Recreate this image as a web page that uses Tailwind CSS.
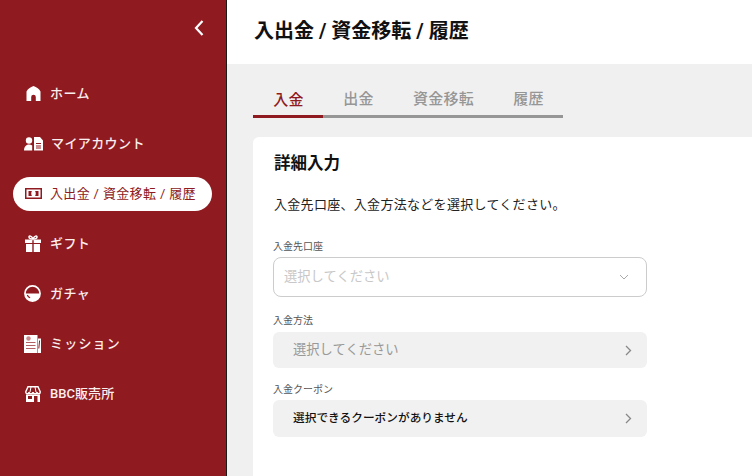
<!DOCTYPE html>
<html lang="ja">
<head>
<meta charset="UTF-8">
<title>入出金 / 資金移転 / 履歴</title>
<script src="https://cdn.jsdelivr.net/npm/@tailwindcss/browser@4"></script>
</head>
<body class="bg-[#f0f0f0]">
<div class="flex h-[476px] w-[752px] overflow-hidden font-['Roboto','Noto_Sans_CJK_JP',sans-serif]">
  <!-- sidebar -->
  <aside class="w-[227px] h-full shrink-0 bg-[#8f1b21] border-r border-[#1a1a1a] text-white">
    <div class="h-[55px] flex items-center justify-end pr-[21px]">
      <svg class="w-[12px] h-[18px]" viewBox="0 0 12 18" fill="none" stroke="#fff" stroke-width="2.2"><path d="M9.5 2L3 9l6.500 7"/></svg>
    </div>
    <nav class="flex flex-col mt-[22px] text-[13px] tracking-[0.4px]">
      <a class="h-[34px] mb-[16px] flex items-center pl-[24px] gap-[8px] pb-[1px] text-[#fbeeee] font-medium">
        <span class="w-[18px] h-[18px] flex items-center justify-center">
          <svg class="w-[15px] h-[15px]" viewBox="0 0 15 15" fill="#fff"><path d="M7.500 0C4.500 1.300 1.500 3 .5 5.500V15h4.700v-4a2.300 2.300 0 014.600 0v4h4.700V5.500C13.500 3 10.500 1.300 7.500 0z"/></svg>
        </span>
        ホーム
      </a>
      <a class="h-[34px] mb-[16px] flex items-center pl-[24px] gap-[8px] pb-[1px] text-[#fbeeee] font-medium">
        <svg class="w-[19px] h-[14px]" viewBox="0 0 19 14" fill="#fff"><circle cx="5" cy="3.500" r="3.200"/><path d="M0 13.500c0-3.500 2-6 5-6 1.200 0 2.300.3 3.200 1v5z"/><path fill-rule="evenodd" d="M10 0h6l3 3.500v10h-9zM12 6v1h5V6zm0 2.500v1h5v-1zm0 2v1h5v-1z"/></svg>
        マイアカウント
      </a>
      <a class="h-[34px] mb-[16px] ml-[13px] w-[199px] rounded-full bg-white flex items-center pl-[12px] gap-[8px] pb-[1px] text-[#8f1b21] tracking-[0.35px]">
        <svg class="w-[17px] h-[11px]" viewBox="0 0 17 11" fill="#8f1b21"><path fill-rule="evenodd" d="M0 0h17v11H0zm1.500 1.500v8h14v-8z"/><path d="M3.500 3H7C6 4 6 7 7 8H3.500zM13.500 3H10c1 1 1 4 0 5h3.500z"/></svg>
        入出金 / 資金移転 / 履歴
      </a>
      <a class="h-[34px] mb-[16px] flex items-center pl-[25px] gap-[9px] pb-[1px] text-[#fbeeee] font-medium">
        <svg class="w-[16px] h-[17px]" viewBox="0 0 16 17" fill="#fff"><path d="M0 4.500h7.300V8H0zM8.700 4.500H16V8H8.700zM1 9h6.300v8H1zM8.700 9H15v8H8.700z"/><path fill="none" stroke="#fff" stroke-width="1.500" d="M8 4C6 4 4 3.200 4 2 4 .5 6.500.5 8 4c1.500-3.500 4-3.500 4-2 0 1.200-2 2-4 2z"/></svg>
        ギフト
      </a>
      <a class="h-[34px] mb-[16px] flex items-center pl-[24px] gap-[9px] pb-[1px] text-[#fbeeee] font-medium">
        <svg class="w-[17px] h-[17px]" viewBox="0 0 18 18"><circle cx="9" cy="9" r="8" fill="none" stroke="#fff" stroke-width="1.800"/><path d="M1 9h16a8 8 0 01-16 0z" fill="#fff"/><path d="M3.500 10.500c.6 1.500 1.800 2.500 3 3" fill="none" stroke="#8f1b21" stroke-width="1.200"/></svg>
        ガチャ
      </a>
      <a class="h-[34px] mb-[16px] flex items-center pl-[24px] gap-[9px] pb-[1px] text-[#fbeeee] font-medium tracking-[1.2px]">
        <svg class="w-[17px] h-[18px]" viewBox="0 0 17 18"><path d="M0 0h13.500v18H0z" fill="#fff"/><path d="M14 3.500h3V18h-3z" fill="#fff"/><path d="M2 7.500h9.500M2 10.500h9.500M2 13.500h9.500" stroke="#8f1b21" stroke-width=".7"/><circle cx="4.500" cy="3.500" r="2.200" fill="#c98a8d"/><path d="M15.600 5.500l-.8 8" stroke="#8f1b21" stroke-width="1"/></svg>
        ミッション
      </a>
      <a class="h-[34px] flex items-center pl-[25px] gap-[9px] pb-[1px] text-[#fbeeee] font-medium tracking-[0.05px]">
        <svg class="w-[16px] h-[16px]" viewBox="0 0 16 16"><path d="M3 .7h10L15.300 6c0 1.100-.8 1.800-1.700 1.800S12 7 12 6c0 1-.9 1.800-2 1.800S8 7 8 6c0 1-.9 1.800-2 1.800S4 7 4 6c0 1-.8 1.800-1.600 1.800S.7 7.100.7 6z" fill="#8f1b21" stroke="#fff" stroke-width="1.400"/><path d="M6 1L5 6M10 1l1 5" stroke="#fff" stroke-width="1"/><path fill="#fff" fill-rule="evenodd" d="M1 8.500h14V16H1zM3 10v3h4v-3zm6 0v6h3.500v-6z"/></svg>
        BBC販売所
      </a>
    </nav>
  </aside>

  <div class="flex-1 min-w-0 flex flex-col">
    <header class="h-[64px] bg-white flex items-center pl-[27px] pb-[2px] text-[20px] font-bold text-[#111] shrink-0">
      入出金 / 資金移転 / 履歴
    </header>
    <main class="flex-1 pl-[26px] bg-[#f0f0f0] overflow-hidden">
      <!-- tabs -->
      <div class="mt-[22px] w-[310px] h-[32px] flex border-b-[3px] border-[#969696] text-[15px] font-medium text-[#969696] tracking-[0.2px]">
        <div class="w-[70px] h-[32px] shrink-0 flex items-center justify-center pl-[1px] pb-[1px] border-b-[3px] border-[#8f1b21] text-[#8f1b21]">入金</div>
        <div class="w-[70px] h-[29px] flex items-center justify-center pl-[1px] pb-[2px]">出金</div>
        <div class="w-[100px] h-[29px] flex items-center justify-center pl-[1px] pb-[2px]">資金移転</div>
        <div class="w-[70px] h-[29px] flex items-center justify-center pl-[1px] pb-[2px]">履歴</div>
      </div>
      <!-- card -->
      <section class="mt-[19px] w-[560px] h-[400px] bg-white rounded-[6px] pl-[20px] pt-[16px]">
        <h2 class="pl-[1px] text-[16.500px] leading-[22px] font-bold text-[#111]">詳細入力</h2>
        <p class="pl-[1px] mt-[20px] text-[13px] leading-[20px] text-[#222] tracking-[0.3px]">入金先口座、入金方法などを選択してください。</p>
        <div class="w-[374px]">
          <label class="block mt-[25px] text-[10px] leading-[14px] text-[#555]">入金先口座</label>
          <div class="mt-[3px] h-[40px] flex items-center justify-between pl-[10px] pr-[17px] bg-white border border-[#ccc] rounded-[8px] text-[13.300px] text-[#c8c8c8]">
            選択してください
            <svg class="w-[10px] h-[6px]" viewBox="0 0 10 6" fill="none" stroke="#aaa" stroke-width="1"><path d="M1 1l4 4 4-4"/></svg>
          </div>
          <label class="block mt-[17px] text-[10px] leading-[14px] text-[#555]">入金方法</label>
          <div class="mt-[4px] h-[36px] flex items-center justify-between pl-[20px] pr-[15px] bg-[#f1f1f1] rounded-[6px] text-[13.300px] text-[#999]">
            <span class="-mt-[1px]">選択してください</span>
            <svg class="w-[7px] h-[11px]" viewBox="0 0 7 11" fill="none" stroke="#888" stroke-width="1.300"><path d="M1 1l4.500 4.500L1 10"/></svg>
          </div>
          <label class="block mt-[15px] text-[10px] leading-[14px] text-[#555]">入金クーポン</label>
          <div class="mt-[3px] h-[37px] flex items-center justify-between pl-[20px] pr-[15px] bg-[#f1f1f1] rounded-[6px] text-[11.700px] font-medium text-[#111]">
            選択できるクーポンがありません
            <svg class="w-[7px] h-[11px]" viewBox="0 0 7 11" fill="none" stroke="#888" stroke-width="1.300"><path d="M1 1l4.500 4.500L1 10"/></svg>
          </div>
        </div>
      </section>
    </main>
  </div>
</div>
</body>
</html>
